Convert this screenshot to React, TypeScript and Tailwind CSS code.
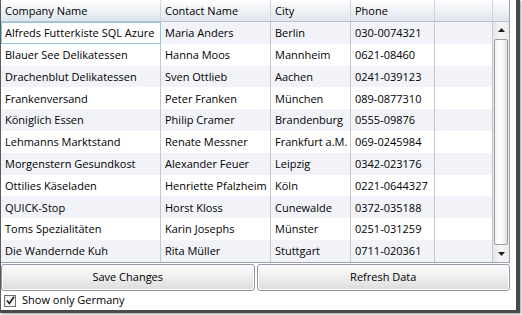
import React from 'react';

type Customer = { company: string; contact: string; city: string; phone: string };

const CUSTOMERS: Customer[] = [
  { company: 'Alfreds Futterkiste SQL Azure', contact: 'Maria Anders', city: 'Berlin', phone: '030-0074321' },
  { company: 'Blauer See Delikatessen', contact: 'Hanna Moos', city: 'Mannheim', phone: '0621-08460' },
  { company: 'Drachenblut Delikatessen', contact: 'Sven Ottlieb', city: 'Aachen', phone: '0241-039123' },
  { company: 'Frankenversand', contact: 'Peter Franken', city: 'München', phone: '089-0877310' },
  { company: 'Königlich Essen', contact: 'Philip Cramer', city: 'Brandenburg', phone: '0555-09876' },
  { company: 'Lehmanns Marktstand', contact: 'Renate Messner', city: 'Frankfurt a.M.', phone: '069-0245984' },
  { company: 'Morgenstern Gesundkost', contact: 'Alexander Feuer', city: 'Leipzig', phone: '0342-023176' },
  { company: 'Ottilies Käseladen', contact: 'Henriette Pfalzheim', city: 'Köln', phone: '0221-0644327' },
  { company: 'QUICK-Stop', contact: 'Horst Kloss', city: 'Cunewalde', phone: '0372-035188' },
  { company: 'Toms Spezialitäten', contact: 'Karin Josephs', city: 'Münster', phone: '0251-031259' },
  { company: 'Die Wandernde Kuh', contact: 'Rita Müller', city: 'Stuttgart', phone: '0711-020361' },
];

const COLS = 'grid grid-cols-[160px_110px_80px_84px_58px]';

function HeaderCell({ label }: { label?: string }) {
  return (
    <div className="flex items-center border-r border-[#d0d6de] pl-[4px] pt-[2px] whitespace-nowrap">
      {label}
    </div>
  );
}

function Cell({ text, focused }: { text: string; focused?: boolean }) {
  return (
    <div
      className={
        focused
          ? 'flex items-center border-r border-[#c4c8ce] bg-white pl-[4px] pt-[1px] whitespace-nowrap outline outline-1 -outline-offset-1 outline-[#8fc6da]'
          : 'flex items-center border-r border-[#c4c8ce] pl-[4px] pt-[1px] whitespace-nowrap'
      }
    >
      {text}
    </div>
  );
}

function Arrow({ up }: { up?: boolean }) {
  return (
    <div className="flex h-[16px] items-center justify-center">
      <svg width="7" height="4" viewBox="0 0 7 4">
        <path d={up ? 'M0 4 L3.5 0 L7 4 Z' : 'M0 0 L3.5 4 L7 0 Z'} fill="#222" />
      </svg>
    </div>
  );
}

function Button({ label }: { label: string }) {
  return (
    <button
      type="button"
      className="flex h-[27px] flex-1 items-center justify-center rounded-[3px] border border-[#8d99a6] bg-gradient-to-b from-[#fbfbfb] via-[#eeeeee] to-[#dcdcdc] text-black shadow-[inset_0_0_0_1px_#ffffff]"
    >
      {label}
    </button>
  );
}

export default function App() {
  return (
    <div className="h-[315px] w-[522px] bg-white text-[11px] text-black" style={{ fontFamily: '"Open Sans", "Noto Sans", sans-serif' }}>
      <div className="h-[313px] w-[520px] border-b-[3px] border-l border-r-[4px] border-[#4a4a4a] border-l-[#5c5c5c] bg-white shadow-[1px_1px_2px_#9a9a9a]">
        <div className="flex w-[509px] flex-col">
          {/* grid */}
          <div className="flex h-[263px] border-b border-r border-[#9aa5b1]">
            <div className="flex flex-col">
              <div className={`${COLS} h-[22px] border-b border-[#b9c2cc] bg-gradient-to-b from-white to-[#dfe5ee]`}>
                <HeaderCell label="Company Name" />
                <HeaderCell label="Contact Name" />
                <HeaderCell label="City" />
                <HeaderCell label="Phone" />
                <HeaderCell />
              </div>
              {CUSTOMERS.map((c, i) => (
                <div
                  key={c.company}
                  className={`${COLS} h-[21.8px] ${i % 2 === 0 ? 'bg-[#f1f3f8]' : 'bg-white'}`}
                >
                  <Cell text={c.company} focused={i === 0} />
                  <Cell text={c.contact} />
                  <Cell text={c.city} />
                  <Cell text={c.phone} />
                  <Cell text="" />
                </div>
              ))}
            </div>
            {/* scrollbar */}
            <div className="flex w-[16px] flex-col">
              <div className="h-[22px] border-b border-[#b9c2cc] bg-gradient-to-b from-white to-[#dfe5ee]" />
              <div className="flex flex-1 flex-col bg-gradient-to-r from-[#e6e6e6] via-[#f7f7f7] to-[#ececec]">
                <Arrow up />
                <div className="mx-[1px] my-[1px] flex-1 rounded-[2px] border border-[#9b9b9b] bg-gradient-to-r from-[#f4f4f4] via-white to-[#e2e2e2]" />
                <Arrow />
              </div>
            </div>
          </div>
          {/* buttons */}
          <div className="flex gap-[2px] pt-[1px]">
            <Button label="Save Changes" />
            <Button label="Refresh Data" />
          </div>
          {/* checkbox */}
          <label className="flex h-[19px] items-center gap-[6px] pl-[3px]">
            <span className="flex h-[12px] w-[12px] items-center justify-center border border-[#707070] bg-gradient-to-br from-[#e9e9e9] to-white">
              <svg width="9" height="9" viewBox="0 0 9 9">
                <path d="M1 4.5 L3.4 7.5 L8 0.8" fill="none" stroke="#1a1a1a" strokeWidth="1.6" />
              </svg>
            </span>
            <span>Show only Germany</span>
          </label>
        </div>
      </div>
    </div>
  );
}
